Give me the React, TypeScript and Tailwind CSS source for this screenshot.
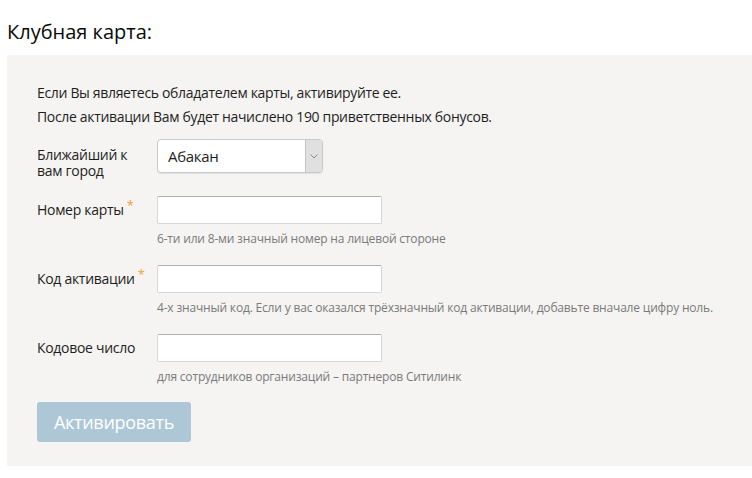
import React from "react";

const font = { fontFamily: '"Open Sans", "Noto Sans", sans-serif' };

function Star() {
  return <span className="text-[#f0a030] text-[13px] relative -top-[5px] ml-[3px]">*</span>;
}

function Field({ label, required, hint }: { label: string; required?: boolean; hint: string }) {
  return (
    <div className="flex">
      <div className="w-[120px] shrink-0 pt-[4px] text-[14px] leading-[20px] tracking-[-0.3px] text-[#1e1e1e]">
        {label}
        {required && <Star />}
      </div>
      <div className="flex flex-col">
        <div className="w-[225px] h-[28px] bg-white border border-[#d6d6d6] border-t-[#b0b0b0] rounded-[2px]" />
        <div className="mt-[7px] text-[12px] leading-[16px] tracking-[-0.18px] text-[#7a7a7a] whitespace-nowrap">{hint}</div>
      </div>
    </div>
  );
}

export default function App() {
  return (
    <div className="w-[752px] h-[478px] bg-white overflow-hidden" style={font}>
      <div className="pl-[7px] pt-[18px] h-[55px] text-[20px] leading-[28px] text-[#0a0a0a]">Клубная карта:</div>
      <div className="ml-[7px] bg-[#f5f4f2] pl-[30px] pt-[26px] pb-[24px]">
        <div className="text-[14px] leading-[24px] tracking-[-0.33px] text-[#1e1e1e]">
          <div>Если Вы являетесь обладателем карты, активируйте ее.</div>
          <div>После активации Вам будет начислено 190 приветственных бонусов.</div>
        </div>
        <div className="flex mt-[10px] h-[34px]">
          <div className="w-[120px] shrink-0 pt-[8px] text-[14px] leading-[16px] tracking-[-0.3px] text-[#1e1e1e] pr-[14px]">
            Ближайший к вам город
          </div>
          <div className="flex w-[166px] h-[34px] bg-white border border-[#c9c9c9] rounded-[4px] overflow-hidden shadow-[0_1px_1px_rgba(0,0,0,0.08)]">
            <div className="flex-1 flex items-center pl-[10px] text-[15px] tracking-[-0.3px] text-[#1e1e1e]">Абакан</div>
            <div className="w-[17px] bg-[#e0e0e0] border-l border-[#c4c4c4] flex items-center justify-center">
              <svg width="8" height="5" viewBox="0 0 8 5" fill="none">
                <path d="M0.5 0.5 L4 4 L7.5 0.5" stroke="#8a8a8a" strokeWidth="1" />
              </svg>
            </div>
          </div>
        </div>
        <div className="mt-[23px] flex flex-col gap-[18px]">
          <Field label="Номер карты" required hint="6-ти или 8-ми значный номер на лицевой стороне" />
          <Field
            label="Код активации"
            required
            hint="4-х значный код. Если у вас оказался трёхзначный код активации, добавьте вначале цифру ноль."
          />
          <Field label="Кодовое число" hint="для сотрудников организаций – партнеров Ситилинк" />
        </div>
        <button className="mt-[17px] w-[154px] h-[40px] bg-[#aec7d7] rounded-[3px] text-white text-[18px] tracking-[-0.3px]">
          Активировать
        </button>
      </div>
    </div>
  );
}
